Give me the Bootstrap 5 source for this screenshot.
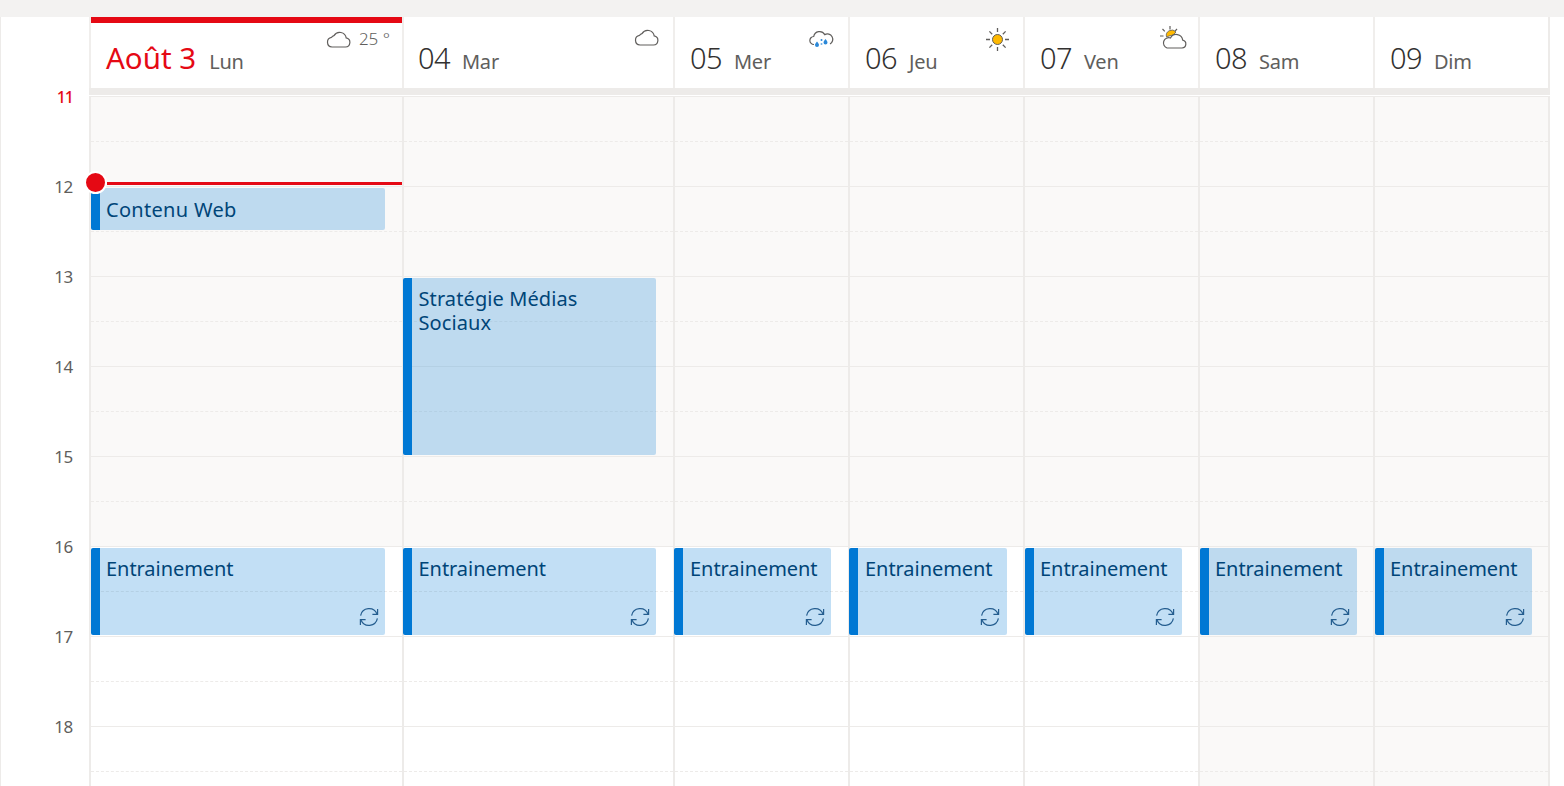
<!DOCTYPE html>
<html lang="fr">
<head>
<meta charset="utf-8">
<title>Calendrier</title>
<link href="https://cdn.jsdelivr.net/npm/bootstrap@5.3.0/dist/css/bootstrap.min.css" rel="stylesheet">
<style>
html,body{height:786px;overflow:hidden;background:#fff}
body{font-family:"Noto Sans","Open Sans",sans-serif;color:#323130}
.top-strip{height:17px;background:#f3f2f1}
.shell{height:769px;border-left:1px solid #edebe9;box-sizing:border-box}
.cal-grid{display:grid;grid-template-columns:88px 313px 271px repeat(5,175px) 2px;height:100%;grid-template-rows:71px 9px 1fr}
.gutter-bar{grid-column:2 / 10;background:linear-gradient(#edebe9 7px,#fff 7px,#fff 8px,#edebe9 8px)}
.day-head{border-left:2px solid #f0eeec;display:flex;align-items:baseline;padding:21px 0 0 15px;position:relative;line-height:40px;height:71px}
.day-num{font-size:29px;font-weight:300;color:#323130;letter-spacing:-.6px}
.day-name{font-size:20px;color:#605e5c;margin-left:12px;letter-spacing:-.2px}
.first-head{padding-left:14px}
.is-today::before{content:"";position:absolute;left:0;right:0;top:0;height:6px;background:#e50914}
.is-today .day-num{color:#e50914;font-weight:400;font-size:29.5px;letter-spacing:0}
.is-today .day-name{margin-left:13px}
.wx{position:absolute;top:12px;right:14px;display:flex;align-items:center;color:#605e5c;line-height:20px}
.wx-rain{top:13px}
.wx-sun{top:10px;right:13px}
.wx-mix{top:9px;right:11px}
.is-today .wx{right:12px;gap:8px;font-size:17px;font-weight:300}
.hours{grid-column:1;font-size:17px;color:#605e5c;text-align:right;padding-right:16px;margin-top:-12px;letter-spacing:-.3px}
.hours div{height:90px;line-height:24px}
.hours .now-hour{color:#e50914;font-weight:500;font-size:16px;letter-spacing:-1px}
.day-body{border-left:2px solid #edebe9;position:relative;background:#fff}
.half{height:45px;border-bottom:1px dashed #edebe9}
.half:nth-child(even){border-bottom:1px solid #edebe9}
.half:nth-child(-n+10),.weekend .half{background:#faf9f8}
.end-rule{background:#edebe9}
.event-block{position:absolute;background:rgba(0,120,212,.24);border-radius:2px;border-left:9px solid #0078d4;color:#004578;font-size:20px;line-height:24px;padding:9px 8px 0 6px;letter-spacing:-.05px}
.ev-mon{left:0;width:294px}
.ev-tue{left:-1px;width:253px;padding-left:6.500px}
.ev-c3{left:-1px;width:157px;padding-left:7px}
.ev-c4{left:-1px;width:158px;padding-left:7px}
.ev-c5{left:0;width:157px}
.slot-a{top:91px;height:42px;padding-top:10px;letter-spacing:.3px}
.slot-b{top:181px;height:177px;letter-spacing:.1px}
.slot-c{top:451px;height:87px}
.repeat-ico{position:absolute;right:6px;bottom:8px}
.ev-c4 .repeat-ico,.ev-c5 .repeat-ico{right:7px}
.now-line{position:absolute;left:16px;right:0;top:85px;height:3px;background:#e50914;z-index:2}
.now-dot{position:absolute;left:-7px;top:74px;width:23px;height:23px;border-radius:50%;background:#e50914;border:2px solid #fff;z-index:3}
</style>
</head>
<body class="m-0">
<svg width="0" height="0" class="position-absolute">
 <defs>
  <symbol id="i-cloud" viewBox="0 0 26 17"><path d="M7 16h13.500a4.600 4.600 0 0 0 .7-9.100A6.600 6.600 0 0 0 9 4.600 5.600 5.600 0 0 0 6.500 6.300 4.900 4.900 0 0 0 7 16z" fill="none" stroke="#605e5c" stroke-width="1.200"/></symbol>
  <symbol id="i-sync" viewBox="0 0 20 20"><g fill="none" stroke="#245d8f" stroke-width="1.200"><path d="M1.600 8.600A8.600 8.600 0 0 1 18 7"/><path d="M18.600 2v5.300h-5.200"/><path d="M18.400 11.400A8.600 8.600 0 0 1 2 13"/><path d="M1.400 18v-5.300h5.200"/></g></symbol>
 </defs>
</svg>
<div class="top-strip"></div>
<div class="shell">
 <div class="cal-grid">
  <div></div>
  <div class="day-head is-today"><span class="day-num">Août 3</span><span class="day-name">Lun</span>
   <div class="wx"><svg width="26" height="17"><use href="#i-cloud"/></svg><span>25 °</span></div></div>
  <div class="day-head first-head"><span class="day-num">04</span><span class="day-name">Mar</span>
   <div class="wx"><svg width="26" height="17"><use href="#i-cloud"/></svg></div></div>
  <div class="day-head"><span class="day-num">05</span><span class="day-name">Mer</span>
   <div class="wx wx-rain"><svg width="25" height="19" viewBox="0 0 25 19"><path d="M5 14.500a4 4 0 0 1-.3-8A6 6 0 0 1 15.800 4.600 4.600 4.600 0 0 1 21 14" fill="none" stroke="#605e5c" stroke-width="1.200"/><path d="M8 11.500c1.600 2 2 2.700 2 3.500a2 2 0 0 1-4 0c0-.8.400-1.500 2-3.500zM16.500 9c1.600 2 2 2.700 2 3.500a2 2 0 0 1-4 0c0-.8.400-1.500 2-3.500z" fill="#2b88d8"/><circle cx="12.500" cy="10" r="1" fill="#2b88d8"/><circle cx="12.500" cy="14" r="1" fill="#71afe5"/></svg></div></div>
  <div class="day-head"><span class="day-num">06</span><span class="day-name">Jeu</span>
   <div class="wx wx-sun"><svg width="25" height="25" viewBox="0 0 25 25"><circle cx="12.500" cy="12.500" r="5" fill="#ffb900" stroke="#605e5c" stroke-width="1"/><path d="M12.500 1v4M12.500 20v4M1 12.500h4M20 12.500h4M4.400 4.400l2.800 2.800M17.800 17.800l2.800 2.800M4.400 20.600l2.800-2.800M17.800 7.200l2.800-2.800" stroke="#605e5c" stroke-width="1.300"/></svg></div></div>
  <div class="day-head"><span class="day-num">07</span><span class="day-name">Ven</span>
   <div class="wx wx-mix"><svg width="27" height="23" viewBox="0 0 27 23"><path d="M6.500 11a5.500 5.500 0 0 1 9.500-5l-3 3-4 1z" fill="#ffb900" stroke="#605e5c" stroke-width=".8"/><path d="M10 0v3.500M2.500 3l2.300 2.300M17 3l-2 2.200M0 10h3.500" stroke="#605e5c" stroke-width="1.200"/><path d="M7 22h15a4 4 0 0 0 .7-7.900A6.500 6.500 0 0 0 10.500 12 5.200 5.200 0 0 0 7 22z" fill="#fff" stroke="#605e5c" stroke-width="1.200"/></svg></div></div>
  <div class="day-head"><span class="day-num">08</span><span class="day-name">Sam</span></div>
  <div class="day-head"><span class="day-num">09</span><span class="day-name">Dim</span></div>
  <div class="end-rule"></div>

  <div></div>
  <div class="gutter-bar"></div>
  <div class="end-rule"></div>

  <div class="hours">
   <div class="now-hour">11</div><div>12</div><div>13</div><div>14</div><div>15</div><div>16</div><div>17</div><div>18</div>
  </div>
  <div class="day-body">
   <div><div class="half"></div><div class="half"></div><div class="half"></div><div class="half"></div><div class="half"></div><div class="half"></div><div class="half"></div><div class="half"></div><div class="half"></div><div class="half"></div><div class="half"></div><div class="half"></div><div class="half"></div><div class="half"></div><div class="half"></div><div class="half"></div></div>
   <div class="now-dot"></div>
   <div class="now-line"></div>
   <div class="event-block ev-mon slot-a">Contenu Web</div>
   <div class="event-block ev-mon slot-c">Entrainement<svg class="repeat-ico" width="20" height="20"><use href="#i-sync"/></svg></div>
  </div>
  <div class="day-body">
   <div><div class="half"></div><div class="half"></div><div class="half"></div><div class="half"></div><div class="half"></div><div class="half"></div><div class="half"></div><div class="half"></div><div class="half"></div><div class="half"></div><div class="half"></div><div class="half"></div><div class="half"></div><div class="half"></div><div class="half"></div><div class="half"></div></div>
   <div class="event-block ev-tue slot-b">Stratégie Médias<br>Sociaux</div>
   <div class="event-block ev-tue slot-c">Entrainement<svg class="repeat-ico" width="20" height="20"><use href="#i-sync"/></svg></div>
  </div>
  <div class="day-body">
   <div><div class="half"></div><div class="half"></div><div class="half"></div><div class="half"></div><div class="half"></div><div class="half"></div><div class="half"></div><div class="half"></div><div class="half"></div><div class="half"></div><div class="half"></div><div class="half"></div><div class="half"></div><div class="half"></div><div class="half"></div><div class="half"></div></div>
   <div class="event-block ev-c3 slot-c">Entrainement<svg class="repeat-ico" width="20" height="20"><use href="#i-sync"/></svg></div>
  </div>
  <div class="day-body">
   <div><div class="half"></div><div class="half"></div><div class="half"></div><div class="half"></div><div class="half"></div><div class="half"></div><div class="half"></div><div class="half"></div><div class="half"></div><div class="half"></div><div class="half"></div><div class="half"></div><div class="half"></div><div class="half"></div><div class="half"></div><div class="half"></div></div>
   <div class="event-block ev-c4 slot-c">Entrainement<svg class="repeat-ico" width="20" height="20"><use href="#i-sync"/></svg></div>
  </div>
  <div class="day-body">
   <div><div class="half"></div><div class="half"></div><div class="half"></div><div class="half"></div><div class="half"></div><div class="half"></div><div class="half"></div><div class="half"></div><div class="half"></div><div class="half"></div><div class="half"></div><div class="half"></div><div class="half"></div><div class="half"></div><div class="half"></div><div class="half"></div></div>
   <div class="event-block ev-c5 slot-c">Entrainement<svg class="repeat-ico" width="20" height="20"><use href="#i-sync"/></svg></div>
  </div>
  <div class="day-body weekend">
   <div><div class="half"></div><div class="half"></div><div class="half"></div><div class="half"></div><div class="half"></div><div class="half"></div><div class="half"></div><div class="half"></div><div class="half"></div><div class="half"></div><div class="half"></div><div class="half"></div><div class="half"></div><div class="half"></div><div class="half"></div><div class="half"></div></div>
   <div class="event-block ev-c5 slot-c">Entrainement<svg class="repeat-ico" width="20" height="20"><use href="#i-sync"/></svg></div>
  </div>
  <div class="day-body weekend">
   <div><div class="half"></div><div class="half"></div><div class="half"></div><div class="half"></div><div class="half"></div><div class="half"></div><div class="half"></div><div class="half"></div><div class="half"></div><div class="half"></div><div class="half"></div><div class="half"></div><div class="half"></div><div class="half"></div><div class="half"></div><div class="half"></div></div>
   <div class="event-block ev-c5 slot-c">Entrainement<svg class="repeat-ico" width="20" height="20"><use href="#i-sync"/></svg></div>
  </div>
  <div class="end-rule"></div>
 </div>
</div>
<script src="https://cdn.jsdelivr.net/npm/bootstrap@5.3.0/dist/js/bootstrap.bundle.min.js"></script>
</body>
</html>
